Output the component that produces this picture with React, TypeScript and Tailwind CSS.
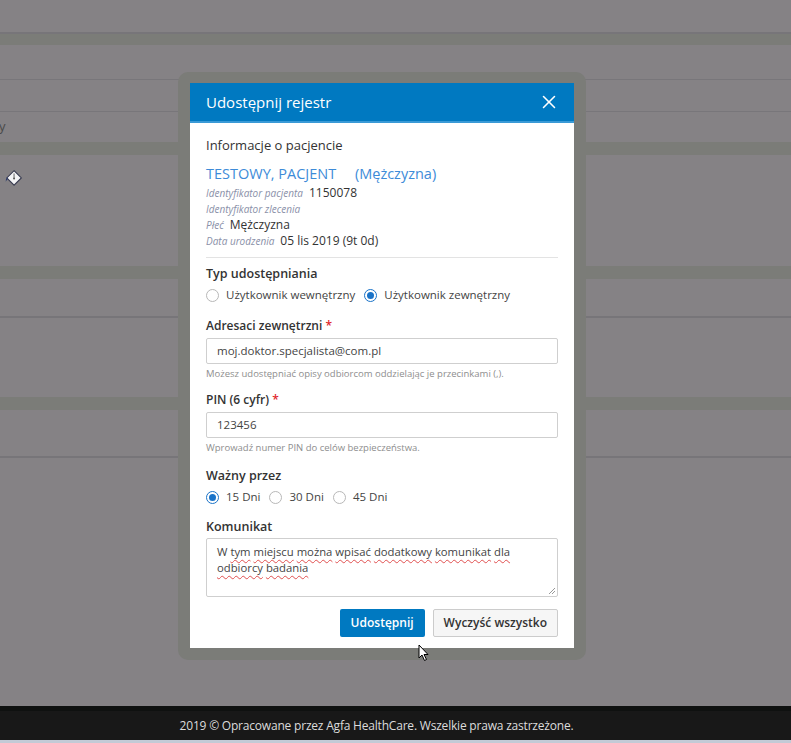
import { X } from 'lucide-react'

const font = { fontFamily: '"Open Sans", "Liberation Sans", sans-serif' }

function Radio({ checked, label }: { checked?: boolean; label: string }) {
  return (
    <label className="flex items-center gap-[7px] mr-[9px]">
      {checked ? (
        <span className="w-[13px] h-[13px] rounded-full border border-[#1a73c8] flex items-center justify-center">
          <span className="w-[7px] h-[7px] rounded-full bg-[#1a73c8]" />
        </span>
      ) : (
        <span className="w-[13px] h-[13px] rounded-full border border-[#b8b8b8] bg-white" />
      )}
      <span className="text-[11.5px] text-[#444]">{label}</span>
    </label>
  )
}

function Field({ label, value, help, top }: { label: string; value: string; help: string; top: string }) {
  return (
    <div className={top}>
      <div className="text-[12px] font-semibold text-[#333] leading-[18px]">
        {label} <span className="text-[#e0262b]">*</span>
      </div>
      <div className="mt-[3px] h-[26px] border border-[#cfcfcf] rounded-[2px] flex items-center px-[10px] text-[11.5px] text-[#444]">
        {value}
      </div>
      <div className="mt-[3px] text-[9.5px] text-[#8e8e8e] leading-[14px]">{help}</div>
    </div>
  )
}

const Sq = ({ children }: { children: string }) => (
  <span className="underline decoration-wavy decoration-[#e05050] decoration-1 underline-offset-[3px]">{children}</span>
)

export default function App() {
  return (
    <div style={font} className="relative w-[791px] h-[743px] overflow-hidden bg-[#858285] flex flex-col">
      {/* page behind the overlay */}
      <div className="flex-1 flex flex-col">
        <div className="h-[34px] border-b-2 border-[#777579]" />
        <div className="h-[11px] bg-[#7b7c78]" />
        <div className="h-[35px] border-b border-[#78767a]" />
        <div className="h-[32px] border-b border-[#78767a]" />
        <div className="h-[30px] flex items-center text-[13px] text-[#4a4a4a]">
          <span className="-ml-[1px]">y</span>
        </div>
        <div className="h-[13px] bg-[#7b7c78]" />
        <div className="h-[111px] pl-[4px] pt-[14px]">
          <svg width="19" height="19" viewBox="0 0 17 17">
            <path d="M9 1.5 L15.5 8 L9 14.5 L2.5 8 Z" fill="#f4f4f6" stroke="#3a3d52" strokeWidth="1" />
            <path d="M9 4 L9 8" stroke="#555" strokeWidth="0.8" />
            <circle cx="9" cy="8.5" r="0.9" fill="#555" />
            <path d="M3.5 7 Q1 9 1.5 11.5 Q2.5 10 3 9.5 Z" fill="#2c3a6e" />
          </svg>
        </div>
        <div className="h-[13px] bg-[#7b7c78]" />
        <div className="h-[39px] border-b-2 border-[#777579]" />
        <div className="h-[79px]" />
        <div className="h-[13px] bg-[#7b7c78]" />
        <div className="h-[48px] border-b-2 border-[#777579]" />
        <div className="flex-1" />
      </div>
      <div className="h-[5px] bg-[#0f1110]" />
      <div className="h-[29px] bg-[#181818] flex items-center justify-center pr-[38px] text-[12px] text-[#dcdcdc] tracking-[-0.2px]">
        2019 © Opracowane przez Agfa HealthCare. Wszelkie prawa zastrzeżone.
      </div>
      <div className="h-[3px] bg-[#c3cad6]" />

      {/* modal */}
      <div className="absolute left-[178px] top-[72px] p-[12px] pt-[11px] bg-[#7b7c78] rounded-[10px]">
        <div className="w-[384px] bg-white">
          <div className="h-[40px] bg-[#0079c1] border-b-2 border-[#3a9ad6] flex items-center justify-between pl-[16px] pr-[14px]">
            <span className="text-[15px] font-medium text-white">Udostępnij rejestr</span>
            <X size={22} strokeWidth={1.7} className="text-white" />
          </div>
          <div className="px-[16px] pt-[12px] pb-[11px]">
            <div className="text-[13px] font-medium text-[#333] leading-[20px]">Informacje o pacjencie</div>
            <div className="mt-[8px] text-[14.5px] font-medium text-[#3d8bd8] leading-[22px]">
              TESTOWY, PACJENT <span className="ml-[15px]">(Mężczyzna)</span>
            </div>
            <div className="text-[12px] text-[#333] leading-[16px]">
              <div className="flex items-baseline gap-[6px]">
                <span className="italic text-[10px] text-[#8a90a8]">Identyfikator pacjenta</span>1150078
              </div>
              <div className="flex items-baseline gap-[6px]">
                <span className="italic text-[10px] text-[#8a90a8]">Identyfikator zlecenia</span>
              </div>
              <div className="flex items-baseline gap-[6px]">
                <span className="italic text-[10px] text-[#8a90a8]">Płeć</span>Mężczyzna
              </div>
              <div className="flex items-baseline gap-[6px]">
                <span className="italic text-[10px] text-[#8a90a8]">Data urodzenia</span>05 lis 2019 (9t 0d)
              </div>
            </div>
            <div className="mt-[8px] border-t border-[#e3e3e3]" />

            <div className="mt-[7px] text-[12.5px] font-semibold text-[#333] leading-[18px]">Typ udostępniania</div>
            <div className="mt-[3px] flex items-center h-[18px]">
              <Radio label="Użytkownik wewnętrzny" />
              <Radio checked label="Użytkownik zewnętrzny" />
            </div>

            <Field
              top="mt-[13px]"
              label="Adresaci zewnętrzni"
              value="moj.doktor.specjalista@com.pl"
              help="Możesz udostępniać opisy odbiorcom oddzielając je przecinkami (,)."
            />
            <Field
              top="mt-[10px]"
              label="PIN (6 cyfr)"
              value="123456"
              help="Wprowadź numer PIN do celów bezpieczeństwa."
            />

            <div className="mt-[12px] text-[12.5px] font-semibold text-[#333] leading-[18px]">Ważny przez</div>
            <div className="mt-[3px] flex items-center h-[18px]">
              <Radio checked label="15 Dni" />
              <Radio label="30 Dni" />
              <Radio label="45 Dni" />
            </div>

            <div className="mt-[12px] text-[12.5px] font-semibold text-[#333] leading-[18px]">Komunikat</div>
            <div className="relative mt-[2px] h-[59px] border border-[#cfcfcf] rounded-[2px] px-[10px] pt-[5px] text-[11.3px] text-[#444] leading-[16px]">
              W <Sq>tym</Sq> <Sq>miejscu</Sq> <Sq>można</Sq> <Sq>wpisać</Sq> <Sq>dodatkowy</Sq> <Sq>komunikat</Sq> <Sq>dla</Sq>{' '}
              <Sq>odbiorcy</Sq> <Sq>badania</Sq>
              <svg className="absolute right-[1px] bottom-[1px]" width="8" height="8" viewBox="0 0 8 8">
                <path d="M7 1 L1 7 M7 4 L4 7" stroke="#999" strokeWidth="1" />
              </svg>
            </div>

            <div className="mt-[12px] flex justify-end gap-[8px]">
              <button className="h-[28px] px-[11px] bg-[#0079c1] text-white text-[12px] font-semibold rounded-[2px]">
                Udostępnij
              </button>
              <button className="h-[28px] px-[10px] bg-[#f6f6f6] border border-[#cccccc] text-[#333] text-[12px] font-semibold rounded-[2px]">
                Wyczyść wszystko
              </button>
            </div>
          </div>
        </div>
      </div>

      {/* mouse pointer */}
      <svg className="absolute left-[418px] top-[644px]" width="12" height="18" viewBox="0 0 12 18">
        <path d="M1 1 L1 14 L4 11 L6.5 16.5 L8.5 15.5 L6 10.5 L10 10.5 Z" fill="#fff" stroke="#000" strokeWidth="1" strokeLinejoin="round" />
      </svg>
    </div>
  )
}
